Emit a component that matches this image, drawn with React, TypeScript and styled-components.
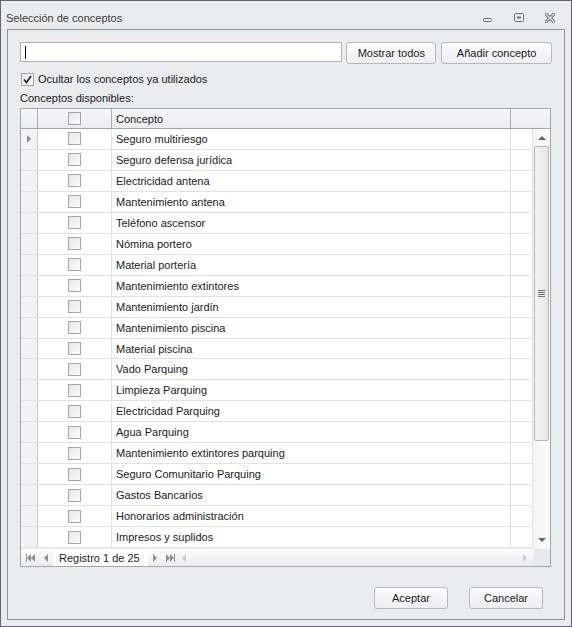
import React from 'react';
import styled, { createGlobalStyle } from 'styled-components';

const GlobalStyle = createGlobalStyle`
  html, body {
    margin: 0;
    padding: 0;
    background: #e9ecef;
  }
  * {
    box-sizing: border-box;
  }
`;

const FONT = `"Liberation Sans", Arial, sans-serif`;

const Window = styled.div`
  width: 572px;
  height: 627px;
  border: 1px solid #5d6874;
  background: #e9ecef;
  display: flex;
  flex-direction: column;
  font-family: ${FONT};
  font-size: 11px;
  color: #1a1a1a;
`;

const TitleBar = styled.div`
  height: 28px;
  display: flex;
  align-items: center;
  padding: 6px 0 0 5px;
`;

const Title = styled.div`
  flex: 1;
  font-size: 11px;
  color: #3a3a3a;
`;

const Controls = styled.div`
  display: flex;
  align-items: center;
  gap: 21px;
  padding-right: 16px;
`;

const Panel = styled.div`
  flex: 1;
  margin: 0 6px 6px 6px;
  border: 1px solid #8f9296;
  padding: 12px 12px 0 12px;
  display: flex;
  flex-direction: column;
`;

const TopRow = styled.div`
  display: flex;
  align-items: flex-start;
  height: 23px;
`;

const SearchInput = styled.div`
  width: 323px;
  height: 20px;
  background: #fff;
  border: 1px solid #abb0b8;
  margin-right: 4px;
  position: relative;
`;

const Caret = styled.span`
  position: absolute;
  left: 4px;
  top: 3px;
  width: 1px;
  height: 13px;
  background: #000;
`;

const Button = styled.button<{ $w: number; $gap?: number }>`
  width: ${({ $w }) => $w}px;
  height: 22px;
  border: 1px solid #b4b9c0;
  border-radius: 3px;
  background: linear-gradient(#fafbfc, #eceef1);
  font-family: ${FONT};
  font-size: 11px;
  color: #1a1a1a;
  padding: 0;
  margin-left: ${({ $gap = 0 }) => $gap}px;
`;

const CheckRow = styled.div`
  display: flex;
  align-items: center;
  margin-top: 7px;
  height: 14px;
  padding-left: 1px;
  gap: 4px;
`;

const Box = styled.span`
  width: 13px;
  height: 13px;
  border: 1px solid #a3a6ab;
  background: linear-gradient(135deg, #e4e6e9, #fbfbfc);
  display: inline-flex;
  align-items: center;
  justify-content: center;
  flex: none;
`;

const SectionLabel = styled.div`
  margin-top: 5px;
  height: 14px;
  line-height: 14px;
`;

const Grid = styled.div`
  margin-top: 3px;
  width: 531px;
  height: 459px;
  border: 1px solid #9ea6b1;
  background: #fff;
  display: flex;
  flex-direction: column;
`;

const HeaderRow = styled.div`
  display: flex;
  height: 20px;
  border-bottom: 1px solid #9ea6b1;
  background: linear-gradient(#f5f7f9, #eaedf1);
`;

const HeadCell = styled.div<{ $w?: number; $center?: boolean }>`
  ${({ $w }) => ($w ? `width: ${$w}px; flex: none;` : 'flex: 1;')}
  border-right: 1px solid #a9b0ba;
  display: flex;
  align-items: center;
  justify-content: ${({ $center }) => ($center ? 'center' : 'flex-start')};
  padding-left: ${({ $center }) => ($center ? 0 : 4)}px;
  &:last-child {
    border-right: none;
  }
`;

const Body = styled.div`
  flex: 1;
  display: flex;
  min-height: 0;
`;

const Rows = styled.div`
  flex: 1;
  display: flex;
  flex-direction: column;
`;

const Row = styled.div`
  display: flex;
  height: 21px;
  border-bottom: 1px solid #e0e2e5;
`;

const Cell = styled.div<{ $w?: number; $center?: boolean; $indicator?: boolean }>`
  ${({ $w }) => ($w ? `width: ${$w}px; flex: none;` : 'flex: 1;')}
  border-right: 1px solid #dfe1e4;
  display: flex;
  align-items: center;
  justify-content: ${({ $center }) => ($center ? 'center' : 'flex-start')};
  padding-left: ${({ $center }) => ($center ? 0 : 4)}px;
  background: ${({ $indicator }) => ($indicator ? '#f1f2f5' : 'transparent')};
  ${({ $indicator }) => ($indicator ? 'border-right-color: #c9cdd3;' : '')}
  white-space: nowrap;
`;

const VScroll = styled.div`
  width: 17px;
  display: flex;
  flex-direction: column;
  align-items: center;
  background: linear-gradient(90deg, #f4f4f4, #fbfbfb);
`;

const ArrowBtn = styled.div`
  height: 17px;
  width: 17px;
  display: flex;
  align-items: center;
  justify-content: center;
  flex: none;
`;

const Thumb = styled.div`
  width: 15px;
  height: 295px;
  border: 1px solid #b3b6ba;
  border-radius: 2px;
  background: linear-gradient(90deg, #f3f3f3, #e6e6e6);
  display: flex;
  align-items: center;
  justify-content: center;
  margin-bottom: auto;
`;

const Footer = styled.div`
  height: 18px;
  display: flex;
  align-items: stretch;
  background: linear-gradient(#fdfdfd, #e9ebee);
  border-top: 1px solid #eef0f2;
`;

const NavBtn = styled.div<{ $w: number }>`
  width: ${({ $w }) => $w}px;
  display: flex;
  align-items: center;
  justify-content: center;
  flex: none;
`;

const Record = styled.div`
  width: 95px;
  background: #fff;
  display: flex;
  align-items: center;
  padding-left: 6px;
  font-size: 11px;
`;

const HScroll = styled.div`
  flex: 1;
  display: flex;
  align-items: center;
  justify-content: space-between;
  padding: 0 6px 0 4px;
`;

const Corner = styled.div`
  width: 17px;
  background: #e6e9ed;
`;

const BottomRow = styled.div`
  display: flex;
  justify-content: flex-end;
  gap: 21px;
  margin-top: 20px;
  padding-right: 21px;
  margin-right: -12px;
`;

const Tri = ({ dir, color = '#7b7f85' }: { dir: 'up' | 'down' | 'left' | 'right'; color?: string }) => {
  const pts = {
    up: '0,4 4,0 8,4',
    down: '0,0 8,0 4,4',
    left: '4,0 4,8 0,4',
    right: '0,0 0,8 4,4',
  }[dir];
  const w = dir === 'up' || dir === 'down' ? 8 : 4;
  const h = dir === 'up' || dir === 'down' ? 4 : 8;
  return (
    <svg width={w} height={h} viewBox={`0 0 ${w} ${h}`}>
      <polygon points={pts} fill={color} />
    </svg>
  );
};

const NavIcon = ({ kind }: { kind: 'first' | 'prev' | 'next' | 'last' }) => {
  const c = '#8b8f95';
  if (kind === 'prev') return <svg width="4" height="8"><polygon points="4,0 4,8 0,4" fill={c} /></svg>;
  if (kind === 'next') return <svg width="4" height="8"><polygon points="0,0 0,8 4,4" fill={c} /></svg>;
  if (kind === 'first')
    return (
      <svg width="9" height="8">
        <rect x="0" y="0" width="1" height="8" fill={c} />
        <polygon points="5,0 5,8 1,4" fill={c} />
        <polygon points="9,0 9,8 5,4" fill={c} />
      </svg>
    );
  return (
    <svg width="9" height="8">
      <polygon points="0,0 0,8 4,4" fill={c} />
      <polygon points="4,0 4,8 8,4" fill={c} />
      <rect x="8" y="0" width="1" height="8" fill={c} />
    </svg>
  );
};

const CheckMark = () => (
  <svg width="9" height="9" viewBox="0 0 9 9">
    <path d="M1 4.5 L3.5 7.5 L8 1" stroke="#2d2d2d" strokeWidth="1.8" fill="none" />
  </svg>
);

const conceptos = [
  'Seguro multiriesgo',
  'Seguro defensa jurídica',
  'Electricidad antena',
  'Mantenimiento antena',
  'Teléfono ascensor',
  'Nómina portero',
  'Material portería',
  'Mantenimiento extintores',
  'Mantenimiento jardín',
  'Mantenimiento piscina',
  'Material piscina',
  'Vado Parquing',
  'Limpieza Parquing',
  'Electricidad Parquing',
  'Agua Parquing',
  'Mantenimiento extintores parquing',
  'Seguro Comunitario Parquing',
  'Gastos Bancarios',
  'Honorarios administración',
  'Impresos y suplidos',
];

export default function App() {
  return (
    <>
      <GlobalStyle />
      <Window>
        <TitleBar>
          <Title>Selección de conceptos</Title>
          <Controls>
            <svg width="10" height="10" viewBox="0 0 10 10">
              <rect x="0.5" y="5.5" width="8" height="3" rx="1" fill="none" stroke="#6b6e72" />
            </svg>
            <svg width="10" height="10" viewBox="0 0 10 10">
              <rect x="0.5" y="0.5" width="9" height="8" rx="1" fill="none" stroke="#6b6e72" />
              <rect x="3" y="3.5" width="4" height="2" fill="#6b6e72" />
            </svg>
            <svg width="10" height="10" viewBox="0 0 10 10">
              <path d="M1 1 L9 9 M9 1 L1 9" stroke="#6b6e72" strokeWidth="3.2" strokeLinecap="square" />
              <path d="M1 1 L9 9 M9 1 L1 9" stroke="#e9ecef" strokeWidth="1.2" strokeLinecap="square" />
            </svg>
          </Controls>
        </TitleBar>
        <Panel>
          <TopRow>
            <SearchInput>
              <Caret />
            </SearchInput>
            <Button $w={90}>Mostrar todos</Button>
            <Button $w={111} $gap={5}>Añadir concepto</Button>
          </TopRow>
          <CheckRow>
            <Box>
              <CheckMark />
            </Box>
            <span>Ocultar los conceptos ya utilizados</span>
          </CheckRow>
          <SectionLabel>Conceptos disponibles:</SectionLabel>
          <Grid>
            <HeaderRow>
              <HeadCell $w={17} />
              <HeadCell $w={74} $center>
                <Box />
              </HeadCell>
              <HeadCell $w={399}>Concepto</HeadCell>
              <HeadCell />
            </HeaderRow>
            <Body>
              <Rows>
                {conceptos.map((c, i) => (
                  <Row key={c}>
                    <Cell $w={17} $center $indicator>
                      {i === 0 && <Tri dir="right" color="#8a8e94" />}
                    </Cell>
                    <Cell $w={74} $center>
                      <Box />
                    </Cell>
                    <Cell $w={399}>{c}</Cell>
                    <Cell />
                  </Row>
                ))}
              </Rows>
              <VScroll>
                <ArrowBtn>
                  <Tri dir="up" color="#5e6166" />
                </ArrowBtn>
                <Thumb>
                  <svg width="7" height="7" viewBox="0 0 7 7">
                    <rect x="0" y="0" width="7" height="1" fill="#6f7378" />
                    <rect x="0" y="2" width="7" height="1" fill="#6f7378" />
                    <rect x="0" y="4" width="7" height="1" fill="#6f7378" />
                    <rect x="0" y="6" width="7" height="1" fill="#6f7378" />
                  </svg>
                </Thumb>
                <ArrowBtn>
                  <Tri dir="down" color="#5e6166" />
                </ArrowBtn>
              </VScroll>
            </Body>
            <Footer>
              <NavBtn $w={18}>
                <NavIcon kind="first" />
              </NavBtn>
              <NavBtn $w={14}>
                <NavIcon kind="prev" />
              </NavBtn>
              <Record>Registro 1 de 25</Record>
              <NavBtn $w={14}>
                <NavIcon kind="next" />
              </NavBtn>
              <NavBtn $w={16}>
                <NavIcon kind="last" />
              </NavBtn>
              <HScroll>
                <Tri dir="left" color="#c9ccd0" />
                <Tri dir="right" color="#c9ccd0" />
              </HScroll>
              <Corner />
            </Footer>
          </Grid>
          <BottomRow>
            <Button $w={74}>Aceptar</Button>
            <Button $w={74}>Cancelar</Button>
          </BottomRow>
        </Panel>
      </Window>
    </>
  );
}
